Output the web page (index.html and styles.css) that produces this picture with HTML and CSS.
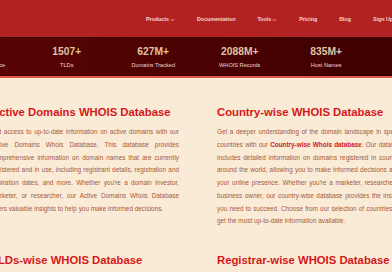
FILE: index.html
```html
<!DOCTYPE html>
<html lang="en">
<head>
<meta charset="utf-8">
<title>WHOIS Database</title>
<link rel="stylesheet" href="styles.css">
</head>
<body>
<header class="topbar">
  <nav class="nav">
    <a class="nav-item" href="#">Products<svg class="chev" viewBox="0 0 6 4" width="5" height="4"><path d="M1 1 L3 3 L5 1" fill="none" stroke="currentColor" stroke-width="0.9"/></svg></a>
    <a class="nav-item" href="#">Documentation</a>
    <a class="nav-item" href="#">Tools<svg class="chev" viewBox="0 0 6 4" width="5" height="4"><path d="M1 1 L3 3 L5 1" fill="none" stroke="currentColor" stroke-width="0.9"/></svg></a>
    <a class="nav-item" href="#">Pricing</a>
    <a class="nav-item" href="#">Blog</a>
    <a class="nav-item" href="#">Sign Up</a>
  </nav>
</header>

<section class="stats">
  <div class="stats-row">
    <div class="stat"><span class="stat-num">15+</span><span class="stat-label">Years of Experience</span></div>
    <div class="stat"><span class="stat-num">1507+</span><span class="stat-label">TLDs</span></div>
    <div class="stat"><span class="stat-num">627M+</span><span class="stat-label">Domains Tracked</span></div>
    <div class="stat"><span class="stat-num">2088M+</span><span class="stat-label">WHOIS Records</span></div>
    <div class="stat"><span class="stat-num">835M+</span><span class="stat-label">Host Names</span></div>
  </div>
</section>

<main class="content">
  <article class="block">
    <h2 class="block-title">Active Domains WHOIS Database</h2>
    <p class="block-text">
      <span class="ln">Get access to up-to-date information on active domains with our</span>
      <span class="ln">Active Domains Whois Database. This database provides</span>
      <span class="ln">comprehensive information on domain names that are currently</span>
      <span class="ln">registered and in use, including registrant details, registration and</span>
      <span class="ln">expiration dates, and more. Whether you're a domain investor,</span>
      <span class="ln">marketer, or researcher, our Active Domains Whois Database</span>
      <span class="ln last">offers valuable insights to help you make informed decisions.</span>
    </p>
  </article>
  <article class="block">
    <h2 class="block-title">Country-wise WHOIS Database</h2>
    <p class="block-text">
      <span class="ln">Get a deeper understanding of the domain landscape in specific</span>
      <span class="ln">countries with our <a class="inline-link" href="#">Country-wise Whois database</a>. Our database</span>
      <span class="ln">includes detailed information on domains registered in countries</span>
      <span class="ln">around the world, allowing you to make informed decisions about</span>
      <span class="ln">your online presence. Whether you're a marketer, researcher, or</span>
      <span class="ln">business owner, our country-wise database provides the insights</span>
      <span class="ln">you need to succeed. Choose from our selection of countries and</span>
      <span class="ln last">get the most up-to-date information available.</span>
    </p>
  </article>
  <article class="block">
    <h2 class="block-title">TLDs-wise WHOIS Database</h2>
  </article>
  <article class="block">
    <h2 class="block-title">Registrar-wise WHOIS Database</h2>
  </article>
</main>
</body>
</html>
```

FILE: styles.css
```css
html, body {
  margin: 0;
  padding: 0;
}
body {
  background: #faebd7;
  font-family: "Liberation Sans", Arial, sans-serif;
  overflow: hidden;
  width: 392px;
  height: 272px;
}

.topbar {
  background: #b22222;
  height: 37px;
  display: flex;
  align-items: center;
  border-bottom: 1px solid #3a0000;
}
.nav {
  display: flex;
  align-items: center;
  gap: 22px;
  margin-left: 146px;
  margin-top: 1px;
  white-space: nowrap;
}
.nav-item {
  color: #f8d8d0;
  text-decoration: none;
  font-weight: bold;
  font-size: 5.3px;
  display: inline-flex;
  align-items: center;
  gap: 1px;
}
.chev {
  display: block;
  margin-top: 2px;
}

.stats {
  background: linear-gradient(90deg, #580404, #3e0000);
  height: 38px;
  border-bottom: 2px solid #dc5a4c;
  overflow: hidden;
}
.stats-row {
  display: grid;
  grid-template-columns: repeat(5, 86.5px);
  margin-left: -63px;
}
.stat {
  display: flex;
  flex-direction: column;
  align-items: center;
  padding-top: 8px;
  gap: 3px;
  white-space: nowrap;
}
.stat-num {
  color: #dfc3a0;
  font-weight: bold;
  font-size: 10.3px;
  line-height: 12px;
}
.stat-label {
  color: #f2d6cf;
  font-size: 5.6px;
  line-height: 8px;
}

.content {
  display: grid;
  grid-template-columns: 188px 188px;
  column-gap: 38px;
  row-gap: 25px;
  margin-left: -9px;
  padding-top: 27px;
}
.block {
  min-width: 0;
}
.block-title {
  margin: 0;
  color: #d4181a;
  font-size: 11.3px;
  line-height: 14px;
  font-weight: bold;
  white-space: nowrap;
}
.block-text {
  margin: 7px 0 0;
  color: #a45a3c;
  font-size: 6.4px;
  line-height: 12.75px;
}
.ln {
  display: block;
  text-align: justify;
  text-align-last: justify;
}
.ln.last {
  text-align-last: left;
}
.inline-link {
  color: #d4181a;
  font-weight: bold;
  text-decoration: none;
}
```
